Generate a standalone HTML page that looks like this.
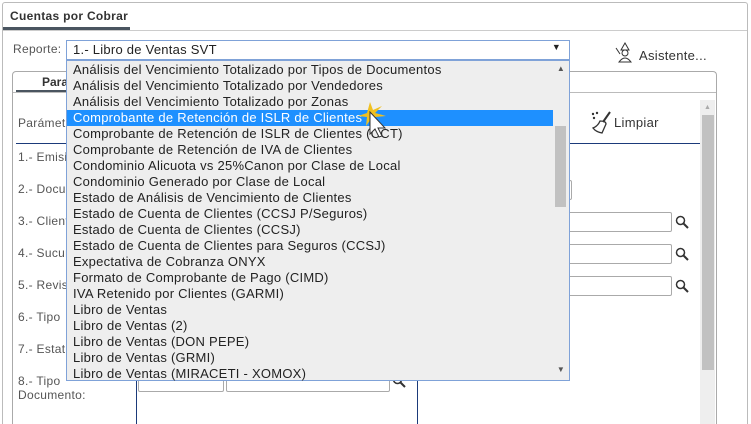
<!DOCTYPE html>
<html style="height:424px;overflow:hidden"><head><meta charset="utf-8"><style>
*{margin:0;padding:0;box-sizing:border-box}
body{width:751px;height:424px;overflow:hidden;background:#fff;font-family:"Liberation Sans",sans-serif;font-size:12px;color:#444;position:relative}
.a{position:absolute}
.dd div{height:16px;line-height:16px;padding-left:6px;font-size:13px;color:#222;white-space:nowrap;letter-spacing:0.25px}
.lbl{position:absolute;left:18px;font-size:12px;color:#555;letter-spacing:0.3px}
.inp{position:absolute;border:1px solid #aaa;border-radius:2px;background:#fff;height:20px}
</style></head><body>
<div class="a" style="left:2px;top:2px;width:746px;height:422px;border:1px solid #bbb;border-bottom:none;border-radius:3px 3px 0 0"></div>
<div class="a" style="left:10px;top:9px;font-weight:bold;font-size:12px;color:#333;letter-spacing:0.3px">Cuentas por Cobrar</div>
<div class="a" style="left:3px;top:27px;width:127px;height:3px;background:#4a5560"></div>
<div class="a" style="left:3px;top:30px;width:744px;height:1px;background:#ccc"></div>
<div class="a" style="left:13px;top:42px;color:#555;letter-spacing:0.3px">Reporte:</div>
<div class="a" style="left:66px;top:40px;width:504px;height:20px;border:1px solid #7fa2d8;background:#fff;font-size:13px;color:#222;padding:1px 0 0 6px;letter-spacing:0.25px">1.- Libro de Ventas SVT<span class="a" style="right:8px;top:1px;font-size:9px">▼</span></div>
<div class="a" style="left:614px;top:42px;width:22px;height:22px"><svg width="22" height="22"><path d="M11 1 L15 8 H7 Z" fill="none" stroke="#333"/><circle cx="11" cy="11" r="3" fill="none" stroke="#333"/><path d="M5 20 Q11 12 17 20 Z" fill="none" stroke="#333"/><path d="M2 6 L6 12" stroke="#333"/></svg></div>
<div class="a" style="left:639px;top:48px;font-size:13px;color:#333;letter-spacing:0.3px">Asistente...</div>
<div class="a" style="left:12px;top:71px;width:705px;height:353px;border:1px solid #aaa;border-bottom:none;border-radius:4px 4px 0 0"></div>
<div class="a" style="left:42px;top:75px;font-weight:bold;color:#333">Para</div>
<div class="a" style="left:16px;top:90px;width:120px;height:3px;background:#4a5560"></div>
<div class="a" style="left:13px;top:92px;width:703px;height:1px;background:#bbb"></div>
<div class="lbl" style="top:116px">Parámetros</div>
<div class="a" style="left:16px;top:143px;width:120px;height:1px;background:#1b3a7a"></div>
<div class="lbl" style="top:150px">1.- Emisión</div>
<div class="lbl" style="top:182px">2.- Documento</div>
<div class="lbl" style="top:214px">3.- Cliente</div>
<div class="lbl" style="top:246px">4.- Sucursal</div>
<div class="lbl" style="top:278px">5.- Revisión</div>
<div class="lbl" style="top:310px">6.- Tipo</div>
<div class="lbl" style="top:342px">7.- Estatus</div>
<div class="lbl" style="top:374px;line-height:14px">8.- Tipo<br>Documento:</div>
<div class="a" style="left:136px;top:380px;width:1px;height:44px;background:#1b3a7a"></div>
<div class="a" style="left:417px;top:100px;width:1px;height:324px;background:#1b3a7a"></div>
<div class="inp" style="left:138px;top:372px;width:86px"></div>
<div class="inp" style="left:226px;top:372px;width:164px"></div>
<div class="a" style="left:392px;top:374px"><svg width="14" height="14"><circle cx="5.5" cy="5.5" r="4" fill="none" stroke="#333" stroke-width="1.5"/><path d="M8.5 8.5 L13 13" stroke="#333" stroke-width="2"/></svg></div>
<svg class="a" style="left:590px;top:110px" width="24" height="26"><circle cx="3" cy="4" r="1.2" fill="#333"/><circle cx="7" cy="3" r="1.2" fill="#333"/><circle cx="4" cy="8" r="1.2" fill="#333"/><path d="M20 2 L13 12" stroke="#333" stroke-width="2"/><path d="M10 11 Q16 11 16 14 L12 23 Q6 22 3 18 Q8 16 10 11 Z" fill="none" stroke="#333" stroke-width="1.3"/></svg>
<div class="a" style="left:614px;top:115px;font-size:13px;color:#333;letter-spacing:0.3px">Limpiar</div>
<div class="a" style="left:418px;top:143px;width:282px;height:1px;background:#1b3a7a"></div>
<div class="a" style="left:700px;top:100px;width:15px;height:324px;background:#eee"></div>
<div class="a" style="left:702px;top:115px;width:12px;height:255px;background:#c1c1c1"></div>
<div class="a" style="left:704px;top:104px;font-size:7px;color:#aaa">▲</div>
<div class="inp" style="left:560px;top:180px;width:12px"></div>
<div class="inp" style="left:560px;top:212px;width:112px"></div>
<div class="inp" style="left:560px;top:244px;width:112px"></div>
<div class="inp" style="left:560px;top:276px;width:112px"></div>
<svg class="a" style="left:675px;top:215px" width="14" height="14"><circle cx="5.5" cy="5.5" r="4" fill="none" stroke="#333" stroke-width="1.5"/><path d="M8.5 8.5 L13 13" stroke="#333" stroke-width="2"/></svg>
<svg class="a" style="left:675px;top:247px" width="14" height="14"><circle cx="5.5" cy="5.5" r="4" fill="none" stroke="#333" stroke-width="1.5"/><path d="M8.5 8.5 L13 13" stroke="#333" stroke-width="2"/></svg>
<svg class="a" style="left:675px;top:279px" width="14" height="14"><circle cx="5.5" cy="5.5" r="4" fill="none" stroke="#333" stroke-width="1.5"/><path d="M8.5 8.5 L13 13" stroke="#333" stroke-width="2"/></svg>
<div class="a dd" style="left:66px;top:60px;width:504px;height:321px;border:1px solid #7fa2d8;background:#eee;padding-top:1px">
<div>Análisis del Vencimiento Totalizado por Tipos de Documentos</div>
<div>Análisis del Vencimiento Totalizado por Vendedores</div>
<div>Análisis del Vencimiento Totalizado por Zonas</div>
<div style="background:#1e90ff;color:#fff;margin-right:16px">Comprobante de Retención de ISLR de Clientes</div>
<div>Comprobante de Retención de ISLR de Clientes (CCT)</div>
<div>Comprobante de Retención de IVA de Clientes</div>
<div>Condominio Alicuota vs 25%Canon por Clase de Local</div>
<div>Condominio Generado por Clase de Local</div>
<div>Estado de Análisis de Vencimiento de Clientes</div>
<div>Estado de Cuenta de Clientes (CCSJ P/Seguros)</div>
<div>Estado de Cuenta de Clientes (CCSJ)</div>
<div>Estado de Cuenta de Clientes para Seguros (CCSJ)</div>
<div>Expectativa de Cobranza ONYX</div>
<div>Formato de Comprobante de Pago (CIMD)</div>
<div>IVA Retenido por Clientes (GARMI)</div>
<div>Libro de Ventas</div>
<div>Libro de Ventas (2)</div>
<div>Libro de Ventas (DON PEPE)</div>
<div>Libro de Ventas (GRMI)</div>
<div>Libro de Ventas (MIRACETI - XOMOX)</div>
<div class="a" style="right:0;top:0;width:16px;height:319px;background:#eee;padding:0"></div>
<div class="a" style="right:3px;top:65px;width:11px;height:81px;background:#c1c1c1;padding:0"></div>
<div class="a" style="right:4px;top:4px;font-size:8px;color:#555;padding:0;height:auto;line-height:8px">▲</div>
<div class="a" style="right:4px;top:305px;font-size:8px;color:#555;padding:0;height:auto;line-height:8px">▼</div>
</div>
<svg class="a" style="left:356px;top:100px" width="36" height="40"><path d="M14 2 L17 10 L26 6 L19 13 L30 16 L19 17 L24 25 L15 19 L10 26 L11 17 L2 16 L11 13 Z" fill="#f0c020"/><path d="M14 12 L14 34 L19 29 L23 37 L26 36 L22 28 L29 28 Z" fill="#fff" stroke="#333"/></svg>
</body></html>
